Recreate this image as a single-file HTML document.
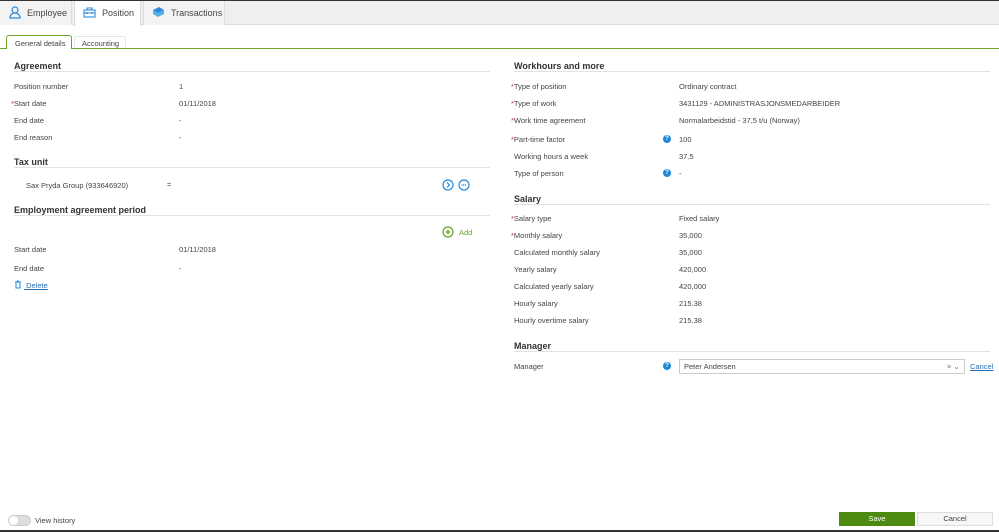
<!DOCTYPE html><html><head><style>
*{margin:0;padding:0;box-sizing:border-box}
body{width:999px;height:532px;position:relative;background:#fff;font-family:"Liberation Sans",sans-serif;font-size:7.5px;color:#444;overflow:hidden}
.a{position:absolute;white-space:nowrap}
.h{font-size:9px;font-weight:bold;color:#333}
.ln{position:absolute;height:1px;background:#e2e2e2}
.r{color:#c0392b}
.q{position:absolute;width:8px;height:8px;border-radius:50%;background:#1e88d6;color:#fff;font-size:6px;text-align:center;line-height:8px;font-weight:bold}
</style></head><body>
<div class="a" style="left:0;top:0;width:999px;height:1px;background:#333"></div>
<div class="a" style="left:0;top:1px;width:999px;height:24px;background:#efefef;border-bottom:1px solid #ddd"></div>
<div class="a" style="left:0;top:1px;width:72px;height:24px;background:#f3f3f3;border-right:1px solid #ddd"></div>
<div class="a" style="left:74px;top:1px;width:67px;height:25px;background:#fff;border-left:1px solid #ddd;border-right:1px solid #ddd"></div>
<div class="a" style="left:143px;top:1px;width:82px;height:24px;background:#f3f3f3;border-left:1px solid #ddd;border-right:1px solid #ddd"></div>
<svg class="a" style="left:9px;top:6px" width="12" height="13" viewBox="0 0 12 13" fill="none" stroke="#2a8ad8" stroke-width="1.2"><circle cx="6" cy="4" r="3"/><path d="M1 12c0-3 2-5 5-5s5 2 5 5z"/></svg>
<div class="a" style="left:27px;top:8px;font-size:9px">Employee</div>
<svg class="a" style="left:83px;top:7px" width="13" height="11" viewBox="0 0 13 11" fill="none" stroke="#2a8ad8" stroke-width="1.1"><rect x="1" y="3" width="11" height="7"/><path d="M4 3V1h5v2M1 6h11M4 5v2M9 5v2"/></svg>
<div class="a" style="left:102px;top:8px;font-size:9px">Position</div>
<svg class="a" style="left:152px;top:6px" width="13" height="12" viewBox="0 0 13 12"><path d="M1 4l6-3 5 3-6 3z" fill="#2a8ad8"/><path d="M1 4v4l5 3V7zM6 7v4l6-3V4z" fill="#5aaee8"/></svg>
<div class="a" style="left:171px;top:8px;font-size:9px">Transactions</div>
<div class="a" style="left:0;top:48px;width:999px;height:1px;background:#6aa329"></div>
<div class="a" style="left:6px;top:35px;width:66px;height:14px;background:#fff;border:1px solid #6aa329;border-bottom:none;border-radius:3px 3px 0 0"></div>
<div class="a" style="left:15px;top:39px">General details</div>
<div class="a" style="left:74px;top:36px;width:52px;height:12px;border:1px solid #e5e5e5;border-bottom:none;border-radius:3px 3px 0 0"></div>
<div class="a" style="left:82px;top:39px">Accounting</div>

<div class="a h" style="left:14px;top:61px">Agreement</div><div class="ln" style="left:14px;top:71px;width:476px"></div>
<div class="a" style="left:14px;top:82px">Position number</div><div class="a" style="left:179px;top:82px">1</div>
<div class="a" style="left:11px;top:99px"><span class="r">*</span>Start date</div><div class="a" style="left:179px;top:99px">01/11/2018</div>
<div class="a" style="left:14px;top:116px">End date</div><div class="a" style="left:179px;top:116px">-</div>
<div class="a" style="left:14px;top:133px">End reason</div><div class="a" style="left:179px;top:133px">-</div>
<div class="a h" style="left:14px;top:157px">Tax unit</div><div class="ln" style="left:14px;top:167px;width:476px"></div>
<div class="a" style="left:26px;top:181px">Sax Pryda Group (933646920)</div><div class="a" style="left:167px;top:180px">=</div>
<svg class="a" style="left:442px;top:179px" width="28" height="12"><circle cx="6" cy="6" r="5" fill="none" stroke="#2a8ad8" stroke-width="1.2"/><path d="M5 3.5l2.5 2.5-2.5 2.5" fill="none" stroke="#2a8ad8" stroke-width="1.2"/><circle cx="22" cy="6" r="5" fill="none" stroke="#2a8ad8" stroke-width="1.2"/><path d="M19.5 6h5" stroke="#2a8ad8" stroke-width="1.5" stroke-dasharray="1 .7"/></svg>
<div class="a h" style="left:14px;top:205px">Employment agreement period</div><div class="ln" style="left:14px;top:215px;width:476px"></div>
<svg class="a" style="left:442px;top:226px" width="12" height="12"><circle cx="6" cy="6" r="5" fill="none" stroke="#6aa329" stroke-width="1.2"/><path d="M6 3.5v5M3.5 6h5" stroke="#6aa329" stroke-width="1.3"/></svg>
<div class="a" style="left:459px;top:228px;color:#6aa329">Add</div>
<div class="a" style="left:14px;top:245px">Start date</div><div class="a" style="left:179px;top:245px">01/11/2018</div>
<div class="a" style="left:14px;top:264px">End date</div><div class="a" style="left:179px;top:264px">-</div>
<svg class="a" style="left:14px;top:280px" width="8" height="9"><path d="M1 2h6M3 1h2M2 2v6h4V2" fill="none" stroke="#2a8ad8"/></svg>
<div class="a" style="left:24px;top:281px;color:#2a6fb5;text-decoration:underline">&nbsp;Delete</div>

<div class="a h" style="left:514px;top:61px">Workhours and more</div><div class="ln" style="left:514px;top:71px;width:476px"></div>
<div class="a" style="left:511px;top:82px"><span class="r">*</span>Type of position</div><div class="a" style="left:679px;top:82px">Ordinary contract</div>
<div class="a" style="left:511px;top:99px"><span class="r">*</span>Type of work</div><div class="a" style="left:679px;top:99px">3431129 - ADMINISTRASJONSMEDARBEIDER</div>
<div class="a" style="left:511px;top:116px"><span class="r">*</span>Work time agreement</div><div class="a" style="left:679px;top:116px">Normalarbeidstid - 37,5 t/u (Norway)</div>
<div class="a" style="left:511px;top:135px"><span class="r">*</span>Part-time factor</div><div class="q" style="left:663px;top:135px">?</div><div class="a" style="left:679px;top:135px">100</div>
<div class="a" style="left:514px;top:152px">Working hours a week</div><div class="a" style="left:679px;top:152px">37.5</div>
<div class="a" style="left:514px;top:169px">Type of person</div><div class="q" style="left:663px;top:169px">?</div><div class="a" style="left:679px;top:169px">-</div>
<div class="a h" style="left:514px;top:194px">Salary</div><div class="ln" style="left:514px;top:204px;width:476px"></div>
<div class="a" style="left:511px;top:214px"><span class="r">*</span>Salary type</div><div class="a" style="left:679px;top:214px">Fixed salary</div>
<div class="a" style="left:511px;top:231px"><span class="r">*</span>Monthly salary</div><div class="a" style="left:679px;top:231px">35,000</div>
<div class="a" style="left:514px;top:248px">Calculated monthly salary</div><div class="a" style="left:679px;top:248px">35,000</div>
<div class="a" style="left:514px;top:265px">Yearly salary</div><div class="a" style="left:679px;top:265px">420,000</div>
<div class="a" style="left:514px;top:282px">Calculated yearly salary</div><div class="a" style="left:679px;top:282px">420,000</div>
<div class="a" style="left:514px;top:299px">Hourly salary</div><div class="a" style="left:679px;top:299px">215.38</div>
<div class="a" style="left:514px;top:316px">Hourly overtime salary</div><div class="a" style="left:679px;top:316px">215.38</div>
<div class="a h" style="left:514px;top:341px">Manager</div><div class="ln" style="left:514px;top:351px;width:476px"></div>
<div class="a" style="left:514px;top:362px">Manager</div><div class="q" style="left:663px;top:362px">?</div>
<div class="a" style="left:679px;top:359px;width:286px;height:15px;border:1px solid #ccc"></div>
<div class="a" style="left:684px;top:362px">Peter Andersen</div>
<div class="a" style="left:947px;top:362px;color:#666">× ⌄</div>
<div class="a" style="left:970px;top:362px;color:#2a6fb5;text-decoration:underline">Cancel</div>

<div class="a" style="left:8px;top:515px;width:23px;height:11px;border-radius:6px;background:#ddd;border:1px solid #ccc"></div>
<div class="a" style="left:9px;top:516px;width:9px;height:9px;border-radius:50%;background:#fff"></div>
<div class="a" style="left:35px;top:516px">View history</div>
<div class="a" style="left:839px;top:512px;width:76px;height:14px;background:#4c8a12;color:#fff;text-align:center;line-height:14px">Save</div>
<div class="a" style="left:917px;top:512px;width:76px;height:14px;background:#f7f7f7;border:1px solid #ddd;text-align:center;line-height:12px">Cancel</div>
<div class="a" style="left:0;top:530px;width:999px;height:2px;background:#333"></div>
</body></html>
